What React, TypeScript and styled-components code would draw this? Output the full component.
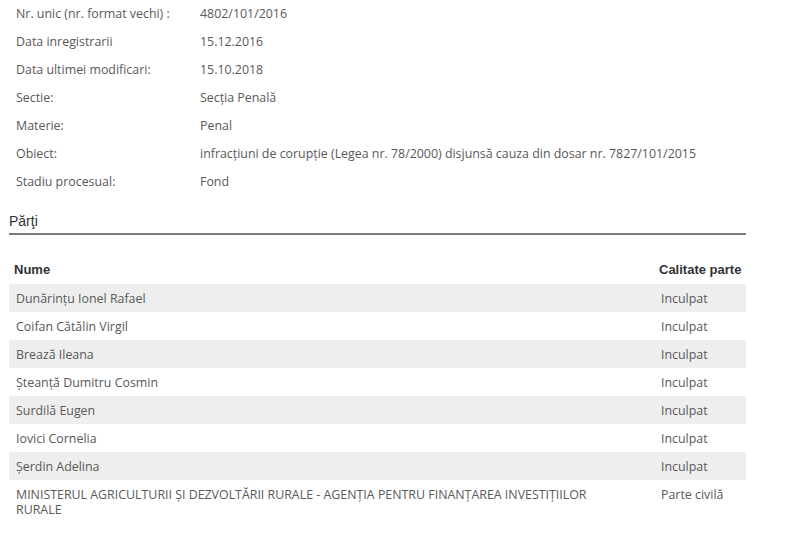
import React from "react";
import styled, { createGlobalStyle } from "styled-components";

const GlobalStyle = createGlobalStyle`
  body {
    margin: 0;
    background: #ffffff;
    font-family: "Open Sans", "DejaVu Sans", sans-serif;
  }
`;

const details = [
  { label: "Nr. unic (nr. format vechi) :", value: "4802/101/2016" },
  { label: "Data inregistrarii", value: "15.12.2016" },
  { label: "Data ultimei modificari:", value: "15.10.2018" },
  { label: "Sectie:", value: "Secția Penală" },
  { label: "Materie:", value: "Penal" },
  {
    label: "Obiect:",
    value:
      "infracțiuni de corupție (Legea nr. 78/2000) disjunsă cauza din dosar nr. 7827/101/2015",
  },
  { label: "Stadiu procesual:", value: "Fond" },
];

const parti = [
  { nume: "Dunărințu Ionel Rafael", calitate: "Inculpat" },
  { nume: "Coifan Cătălin Virgil", calitate: "Inculpat" },
  { nume: "Brează Ileana", calitate: "Inculpat" },
  { nume: "Șteanță Dumitru Cosmin", calitate: "Inculpat" },
  { nume: "Surdilă Eugen", calitate: "Inculpat" },
  { nume: "Iovici Cornelia", calitate: "Inculpat" },
  { nume: "Șerdin Adelina", calitate: "Inculpat" },
  {
    nume: "MINISTERUL AGRICULTURII ȘI DEZVOLTĂRII RURALE - AGENȚIA PENTRU FINANȚAREA INVESTIȚIILOR RURALE",
    calitate: "Parte civilă",
  },
];

const Page = styled.main`
  width: 800px;
`;

const DetailList = styled.dl`
  margin: 0;
  padding-left: 16px;
  display: grid;
  grid-template-columns: 184px 1fr;
  grid-auto-rows: 28px;
  align-items: center;
  font-size: 12.4px;
  color: #595959;

  dt,
  dd {
    margin: 0;
    line-height: 16px;
  }
`;

const SectionTitle = styled.h3`
  margin: 16px 0 0 9px;
  width: 737px;
  padding-bottom: 3px;
  border-bottom: 2px solid #7a7a7a;
  font-family: "Liberation Sans", Arial, sans-serif;
  font-size: 14px;
  font-weight: normal;
  line-height: 18px;
  color: #333333;
`;

const PartiTable = styled.table`
  margin: 19px 0 0 9px;
  width: 737px;
  border-collapse: collapse;
  font-size: 12.4px;
  color: #595959;
`;

const HeadCell = styled.th`
  height: 30px;
  padding: 0 0 0 5px;
  text-align: left;
  white-space: nowrap;
  font-family: "Liberation Sans", Arial, sans-serif;
  font-size: 13px;
  font-weight: bold;
  color: #333333;
`;

const Row = styled.tr<{ $shaded: boolean }>`
  background: ${(p) => (p.$shaded ? "#eeeeee" : "transparent")};
`;

const NameCell = styled.td`
  padding: 7px 40px 6px 7px;
  line-height: 15px;
  vertical-align: top;
`;

const RoleCell = styled.td`
  box-sizing: border-box;
  width: 92px;
  padding: 7px 4px 6px 7px;
  line-height: 15px;
  vertical-align: top;
  white-space: nowrap;
`;

export default function App() {
  return (
    <Page>
      <GlobalStyle />
      <DetailList>
        {details.map((d) => (
          <React.Fragment key={d.label}>
            <dt>{d.label}</dt>
            <dd>{d.value}</dd>
          </React.Fragment>
        ))}
      </DetailList>

      <SectionTitle>Părţi</SectionTitle>

      <PartiTable>
        <thead>
          <tr>
            <HeadCell>Nume</HeadCell>
            <HeadCell>Calitate parte</HeadCell>
          </tr>
        </thead>
        <tbody>
          {parti.map((p, i) => (
            <Row key={p.nume} $shaded={i % 2 === 0}>
              <NameCell>{p.nume}</NameCell>
              <RoleCell>{p.calitate}</RoleCell>
            </Row>
          ))}
        </tbody>
      </PartiTable>
    </Page>
  );
}
